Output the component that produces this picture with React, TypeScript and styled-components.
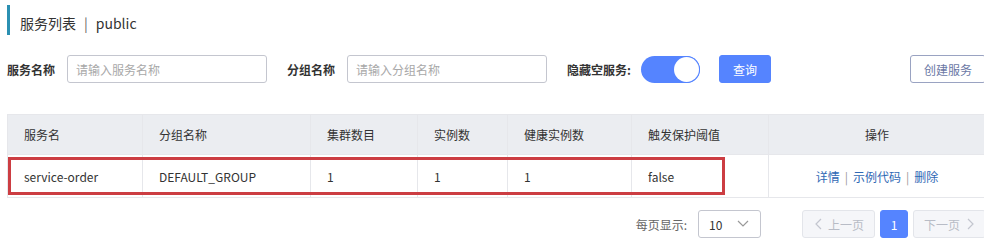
import React from "react";
import styled, { createGlobalStyle } from "styled-components";

const Global = createGlobalStyle`
  html, body { margin: 0; padding: 0; background: #fff; overflow: hidden; }
  body { font-family: "Noto Sans CJK SC", "Liberation Sans", sans-serif; color: #333; }
  * { box-sizing: border-box; }
`;

const Page = styled.div`
  width: 986px;
  padding: 5px 0 0 7px;
`;

const Title = styled.div`
  height: 30px;
  padding-top: 6px;
  line-height: 24px;
  border-left: 3px solid #2b90b2;
  padding-left: 10px;
  font-size: 14px;
  color: #333;
  white-space: nowrap;
`;

const Sep = styled.span`
  margin: 0 8px;
  color: #666;
`;

const Filters = styled.div`
  margin-top: 20px;
  height: 28px;
  display: flex;
  align-items: center;
`;

const Label = styled.span<{ $gap?: number }>`
  font-size: 12px;
  font-weight: bold;
  color: #333;
  margin-right: ${(p) => p.$gap ?? 12}px;
  white-space: nowrap;
`;

const Input = styled.input`
  width: 200px;
  height: 28px;
  border: 1px solid #c4c6cf;
  border-radius: 3px;
  padding: 0 8px;
  font-size: 12px;
  font-family: inherit;
  margin-right: 20px;
  outline: none;
  &::placeholder { color: #a8a8a8; }
`;

const Toggle = styled.div`
  width: 59px;
  height: 27px;
  border-radius: 14px;
  background: #5584ff;
  position: relative;
  margin-right: 19px;
`;

const Knob = styled.div`
  position: absolute;
  right: 1px;
  top: 1px;
  width: 25px;
  height: 25px;
  border-radius: 50%;
  background: #fff;
  box-shadow: 0 0 0 1px #5584ff;
`;

const Button = styled.button<{ $primary?: boolean }>`
  height: 28px;
  padding: 0 13px;
  font-size: 12px;
  font-family: inherit;
  border-radius: 3px;
  border: 1px solid ${(p) => (p.$primary ? "#5584ff" : "#9aa3c2")};
  background: ${(p) => (p.$primary ? "#5584ff" : "#fff")};
  color: ${(p) => (p.$primary ? "#fff" : "#6b78a5")};
  white-space: nowrap;
`;

const Spacer = styled.div`
  flex: 1;
`;

const Table = styled.div`
  margin-top: 31px;
  border: 1px solid #e6e7eb;
  border-right: none;
  display: grid;
  grid-template-columns: 135px 168px 107px 90px 124px 137px 1fr;
  font-size: 12px;
  position: relative;
`;

const Cell = styled.div<{ $head?: boolean; $center?: boolean }>`
  height: ${(p) => (p.$head ? 40 : 42)}px;
  display: flex;
  align-items: center;
  justify-content: ${(p) => (p.$center ? "center" : "flex-start")};
  padding-left: ${(p) => (p.$center ? 0 : 16)}px;
  background: ${(p) => (p.$head ? "#ebedf1" : "#fff")};
  border-right: 1px solid #e6e7eb;
  border-bottom: ${(p) => (p.$head ? "1px solid #e6e7eb" : "none")};
  color: #333;
  white-space: nowrap;
`;

const Highlight = styled.div`
  position: absolute;
  left: 0;
  top: 42px;
  width: 717px;
  height: 38px;
  border: 3px solid #cc3d42;
  pointer-events: none;
`;

const Link = styled.a`
  color: #2f68b4;
  text-decoration: none;
`;

const LinkSep = styled.span`
  color: #999;
  margin: 0 5px;
`;

const Pager = styled.div`
  margin-top: 12px;
  display: flex;
  align-items: center;
  justify-content: flex-end;
  font-size: 12px;
`;

const PagerLabel = styled.span`
  color: #666;
  margin-right: 11px;
`;

const Select = styled.div`
  width: 63px;
  height: 28px;
  border: 1px solid #c4c6cf;
  border-radius: 3px;
  display: flex;
  align-items: center;
  justify-content: space-between;
  padding: 0 10px;
  color: #333;
  margin-right: 36px;
`;

const PageBtn = styled.div<{ $active?: boolean; $w: number }>`
  width: ${(p) => p.$w}px;
  height: 28px;
  border-radius: 3px;
  display: flex;
  align-items: center;
  justify-content: center;
  gap: 4px;
  border: 1px solid ${(p) => (p.$active ? "#5584ff" : "#e3e5ea")};
  background: ${(p) => (p.$active ? "#5584ff" : "#f5f6f9")};
  color: ${(p) => (p.$active ? "#fff" : "#b8bcc6")};
  margin-left: 5px;
`;

const Chevron = ({ dir }: { dir: "down" | "left" | "right" }) => {
  const d =
    dir === "down" ? "M2 4 L7 9 L12 4" : dir === "left" ? "M8 2 L3 7 L8 12" : "M4 2 L9 7 L4 12";
  return (
    <svg width={dir === "down" ? 14 : 11} height="14" viewBox={dir === "down" ? "0 0 14 14" : "0 0 11 14"}>
      <path d={d} fill="none" stroke={dir === "down" ? "#999" : "#c3c6cf"} strokeWidth="1.2" />
    </svg>
  );
};

const heads = ["服务名", "分组名称", "集群数目", "实例数", "健康实例数", "触发保护阈值"];
const row = ["service-order", "DEFAULT_GROUP", "1", "1", "1", "false"];

export default function App() {
  return (
    <>
      <Global />
      <Page>
        <Title>
          服务列表<Sep>|</Sep>public
        </Title>
        <Filters>
          <Label>服务名称</Label>
          <Input placeholder="请输入服务名称" />
          <Label>分组名称</Label>
          <Input placeholder="请输入分组名称" />
          <Label $gap={10}>隐藏空服务:</Label>
          <Toggle>
            <Knob />
          </Toggle>
          <Button $primary>查询</Button>
          <Spacer />
          <Button>创建服务</Button>
        </Filters>
        <Table>
          {heads.map((h) => (
            <Cell $head key={h}>
              {h}
            </Cell>
          ))}
          <Cell $head $center>
            操作
          </Cell>
          {row.map((v, i) => (
            <Cell key={i}>{v}</Cell>
          ))}
          <Cell $center>
            <Link>详情</Link>
            <LinkSep>|</LinkSep>
            <Link>示例代码</Link>
            <LinkSep>|</LinkSep>
            <Link>删除</Link>
          </Cell>
          <Highlight />
        </Table>
        <Pager>
          <PagerLabel>每页显示:</PagerLabel>
          <Select>
            <span>10</span>
            <Chevron dir="down" />
          </Select>
          <PageBtn $w={73}>
            <Chevron dir="left" />
            上一页
          </PageBtn>
          <PageBtn $w={28} $active>
            1
          </PageBtn>
          <PageBtn $w={73}>
            下一页
            <Chevron dir="right" />
          </PageBtn>
        </Pager>
      </Page>
    </>
  );
}
